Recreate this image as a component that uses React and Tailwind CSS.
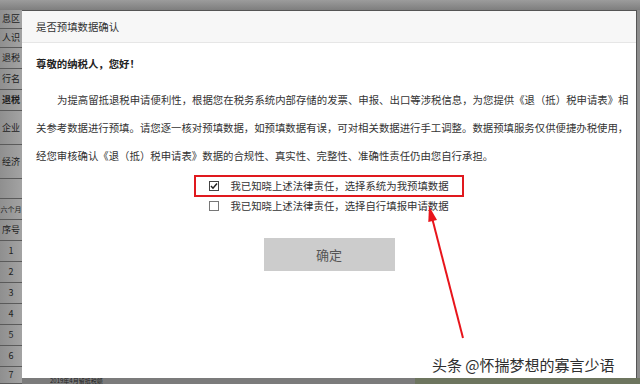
import React from "react";

const F = { fontFamily: '"Noto Sans CJK SC", "Noto Sans", sans-serif' };

const leftRows = [
  { h: 19, t: "息区" },
  { h: 19, t: "人识" },
  { h: 21, t: "退税" },
  { h: 21, t: "行名" },
  { h: 21, t: "退税", b: true },
  { h: 34, t: "企业" },
  { h: 34, t: "经济" },
  { h: 20, t: "" },
  { h: 21, t: "六个月", s: true },
  { h: 21, t: "序号" },
  { h: 21, t: "1" },
  { h: 21, t: "2" },
  { h: 21, t: "3" },
  { h: 21, t: "4" },
  { h: 21, t: "5" },
  { h: 21, t: "6" },
  { h: 17, t: "7" },
];

export default function App() {
  return (
    <div className="relative w-[640px] h-[384px] overflow-hidden bg-[#8d8d8d]" style={F}>
      {/* background page */}
      <div className="flex flex-col h-full overflow-hidden">
        <div className="h-[10px] shrink-0 bg-gradient-to-b from-[#9c9c9c] to-[#7e7e7e]" />
        <div className="flex flex-1 min-h-0">
          <div className="w-[22px] flex flex-col bg-gradient-to-r from-[#8f8f8f] to-[#a3a3a3]">
            {leftRows.map((r, i) => (
              <div
                key={i}
                className={
                  "shrink-0 flex items-center justify-center whitespace-nowrap border-b border-[#5a5a5a] text-[#1e1e1e] " +
                  (r.s ? "text-[7px]" : "text-[9px]") +
                  (r.b ? " font-bold" : "")
                }
                style={{ height: r.h }}
              >
                {r.t}
              </div>
            ))}
          </div>
          <div className="flex-1" />
        </div>
      </div>
      <div className="absolute left-[22px] right-0 bottom-0 h-[6px] flex">
        <div className="w-[393px] bg-[#7b7b7b] flex items-center pl-[28px] text-[6px] leading-none text-[#222] whitespace-nowrap">
          2019年4月留抵税额
        </div>
        <div className="flex-1 bg-[#6d755f]" />
      </div>

      {/* dialog */}
      <div className="absolute left-[22px] top-[10px] w-[615px] h-[368px] bg-white border-t border-[#3a3a3a] border-r border-[#555] flex flex-col text-[#333]">
        <div className="h-[32px] bg-[#f7f7f7] border-b border-[#e6e6e6] flex items-center pl-[14px] text-[10.4px]">
          是否预填数据确认
        </div>
        <div className="flex flex-col text-[10.4px]">
          <div className="pl-[14px] pt-[14px] leading-[14px] font-bold text-[#222]">尊敬的纳税人，您好！</div>
          <div className="pl-[14px] pt-[15px] leading-[28px] whitespace-nowrap">
            <div className="pl-[21px]">为提高留抵退税申请便利性，根据您在税务系统内部存储的发票、申报、出口等涉税信息，为您提供《退（抵）税申请表》相</div>
            <div>关参考数据进行预填。请您逐一核对预填数据，如预填数据有误，可对相关数据进行手工调整。数据预填服务仅供便捷办税使用，</div>
            <div>经您审核确认《退（抵）税申请表》数据的合规性、真实性、完整性、准确性责任仍由您自行承担。</div>
          </div>
          <div className="mt-[5px] mx-auto w-[270px] h-[22px] border-2 border-[#e0191e] flex items-center justify-center">
            <div className="flex items-center gap-[11px]">
              <div className="w-[10px] h-[10px] border border-[#444] bg-white flex items-center justify-center">
                <svg width="8" height="8" viewBox="0 0 8 8">
                  <path d="M1 4 L3 6.2 L7 1.5" stroke="#222" strokeWidth="1.5" fill="none" />
                </svg>
              </div>
              <span className="leading-[14px]">我已知晓上述法律责任，选择系统为我预填数据</span>
            </div>
          </div>
          <div className="h-[18px] flex items-center justify-center">
            <div className="flex items-center gap-[11px]">
              <div className="w-[10px] h-[10px] border border-[#777] bg-white" />
              <span className="leading-[14px]">我已知晓上述法律责任，选择自行填报申请数据</span>
            </div>
          </div>
          <div className="mt-[23px] mx-auto w-[131px] h-[33px] bg-[#cccccc] flex items-center justify-center text-[13px] text-[#555]">
            确定
          </div>
        </div>
      </div>

      {/* arrow */}
      <svg className="absolute left-0 top-0" width="640" height="384" viewBox="0 0 640 384">
        <line x1="463" y1="338" x2="432.6" y2="220" stroke="#e8141b" strokeWidth="2" />
        <polygon points="429,206 437,220 428.3,222" fill="#e8141b" />
      </svg>

      {/* watermark */}
      <div
        className="absolute left-[432px] top-[355px] text-[15px] leading-[20px] text-[#2e2e2e] whitespace-nowrap"
        style={{ textShadow: "0 0 2px #fff, 0 0 2px #fff, 1px 1px 1px #fff" }}
      >
        头条 @怀揣梦想的寡言少语
      </div>
    </div>
  );
}
